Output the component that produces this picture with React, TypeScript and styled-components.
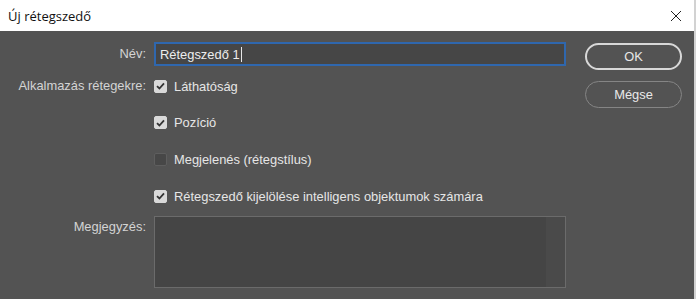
import { createGlobalStyle, styled } from "styled-components";

const GlobalStyle = createGlobalStyle`
  html, body {
    margin: 0;
    padding: 0;
    background: #535353;
  }
  body {
    font-family: "Liberation Sans", Arial, sans-serif;
    font-size: 12.9px;
  }
`;

const Window = styled.div`
  width: 694px;
  height: 299px;
  border-right: 2px solid #d2d2d2;
  display: flex;
  flex-direction: column;
  overflow: hidden;
`;

const TitleBar = styled.div`
  height: 31px;
  background: #ffffff;
  display: flex;
  align-items: center;
  justify-content: space-between;
  padding: 0 12px 0 8px;
  color: #111;
  font-family: "Open Sans", "Liberation Sans", sans-serif;
  font-size: 13px;
`;

const CloseButton = styled.div`
  width: 12px;
  height: 12px;
  display: flex;
`;

const Body = styled.div`
  flex: 1;
  background: #535353;
  display: flex;
  padding-top: 11px;
`;

const Form = styled.div`
  display: grid;
  grid-template-columns: 146px 412px;
  column-gap: 8px;
  row-gap: 11px;
  align-content: start;
`;

const Label = styled.div<{ $top?: number }>`
  color: #d4d4d4;
  text-align: right;
  white-space: nowrap;
  padding-top: ${(p) => p.$top ?? 0}px;
  line-height: 18px;
`;

const NameInput = styled.div`
  height: 24px;
  box-sizing: border-box;
  border: 2px solid #2f67ae;
  background: #464646;
  display: flex;
  align-items: center;
  padding-left: 4px;
  color: #ededed;
`;

const Caret = styled.span`
  display: inline-block;
  width: 1px;
  height: 15px;
  background: #e8e8e8;
  margin-left: 1px;
`;

const OptionList = styled.div`
  display: flex;
  flex-direction: column;
  gap: 18.7px;
`;

const OptionRow = styled.label`
  display: flex;
  align-items: center;
  height: 18px;
  gap: 7px;
  color: #e6e6e6;
  white-space: nowrap;
`;

const Box = styled.span<{ $checked: boolean }>`
  width: 13px;
  height: 13px;
  flex: none;
  box-sizing: border-box;
  border-radius: 2px;
  background: ${(p) => (p.$checked ? "#d9d9d9" : "#474747")};
  border: 1px solid ${(p) => (p.$checked ? "#d9d9d9" : "#5e5e5e")};
  display: flex;
  align-items: center;
  justify-content: center;
`;

const Notes = styled.div`
  height: 72px;
  box-sizing: border-box;
  border: 1px solid #6b6b6b;
  background: #454545;
  display: flex;
  justify-content: flex-end;
`;

const NotesScroll = styled.div`
  width: 19px;
  background: #4a4a4a;
`;

const Buttons = styled.div`
  margin-left: 19px;
  padding-top: 1px;
  display: flex;
  flex-direction: column;
  gap: 11px;
`;

const Button = styled.div<{ $primary?: boolean }>`
  width: 97px;
  height: 27px;
  box-sizing: border-box;
  border-radius: 14px;
  border: ${(p) => (p.$primary ? "2px solid #d8d8d8" : "1px solid #858585")};
  color: #e8e8e8;
  display: flex;
  align-items: center;
  justify-content: center;
`;

const Check = ({ checked, label }: { checked: boolean; label: string }) => (
  <OptionRow>
    <Box $checked={checked}>
      {checked && (
        <svg width="9" height="8" viewBox="0 0 9 8">
          <path d="M1 4.2 L3.4 6.5 L8 1.3" stroke="#333" strokeWidth="1.8" fill="none" />
        </svg>
      )}
    </Box>
    {label}
  </OptionRow>
);

export default function App() {
  return (
    <>
      <GlobalStyle />
      <Window>
        <TitleBar>
          <span>Új rétegszedő</span>
          <CloseButton>
            <svg width="12" height="12" viewBox="0 0 12 12">
              <path d="M1 1 L11 11 M11 1 L1 11" stroke="#222" strokeWidth="1" />
            </svg>
          </CloseButton>
        </TitleBar>
        <Body>
          <Form>
            <Label $top={3}>Név:</Label>
            <NameInput>
              Rétegszedő 1<Caret />
            </NameInput>
            <Label>Alkalmazás rétegekre:</Label>
            <OptionList>
              <Check checked label="Láthatóság" />
              <Check checked label="Pozíció" />
              <Check checked={false} label="Megjelenés (rétegstílus)" />
              <Check checked label="Rétegszedő kijelölése intelligens objektumok számára" />
            </OptionList>
            <Label $top={2}>Megjegyzés:</Label>
            <Notes>
              <NotesScroll />
            </Notes>
          </Form>
          <Buttons>
            <Button $primary>OK</Button>
            <Button>Mégse</Button>
          </Buttons>
        </Body>
      </Window>
    </>
  );
}
